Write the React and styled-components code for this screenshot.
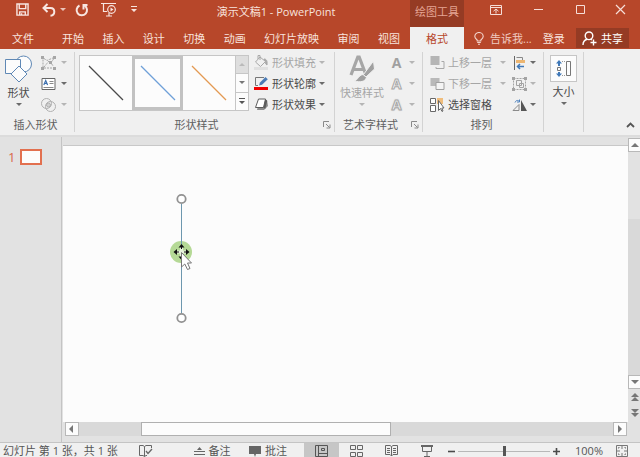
import { useState } from "react";
import styled, { createGlobalStyle } from "styled-components";

const tabs = ["开始", "插入", "设计", "切换", "动画", "幻灯片放映", "审阅", "视图"];

const lineStyles = [
  { name: "黑色线条", color: "#4a4a4a" },
  { name: "蓝色线条", color: "#6fa0d8" },
  { name: "橙色线条", color: "#e39a52" },
];

export default function App() {
  const [activeStyle, setActiveStyle] = useState(1);
  const [zoom, setZoom] = useState(50);

  return (
    <>
      <GlobalStyle />
      <Window>
        <Header>
          <TitleRow>
            <QuickAccess>
              <QuickButton $width={29} aria-label="保存">
                <SaveIcon />
              </QuickButton>
              <QuickButton $width={27} aria-label="撤消">
                <UndoIcon />
              </QuickButton>
              <QuickButton $width={10} aria-label="撤消选项">
                <Caret />
              </QuickButton>
              <QuickButton $width={23} aria-label="重复">
                <RedoIcon />
              </QuickButton>
              <QuickButton $width={28} aria-label="从头开始">
                <PresentIcon />
              </QuickButton>
              <QuickButton $width={20} aria-label="自定义快速访问工具栏">
                <CaretLine />
              </QuickButton>
            </QuickAccess>
            <Title>演示文稿1 - PowerPoint</Title>
            <ContextTitle>绘图工具</ContextTitle>
            <WindowControls>
              <WindowButton aria-label="功能区显示选项">
                <RibbonOptionsIcon />
              </WindowButton>
              <WindowButton aria-label="最小化">
                <svg width="11" height="11" viewBox="0 0 11 11">
                  <path d="M1 5.5H10" stroke="#f6ded8" />
                </svg>
              </WindowButton>
              <WindowButton aria-label="最大化">
                <svg width="11" height="11" viewBox="0 0 11 11">
                  <path d="M1.5 1.5H9.5V9.5H1.5Z" fill="none" stroke="#f6ded8" />
                </svg>
              </WindowButton>
              <WindowButton aria-label="关闭">
                <svg width="11" height="11" viewBox="0 0 11 11">
                  <path d="M1 1L10 10M10 1L1 10" stroke="#f6ded8" strokeWidth="1.2" />
                </svg>
              </WindowButton>
            </WindowControls>
          </TitleRow>
          <TabRow>
            <Tabs>
              <FileTab>文件</FileTab>
              <TabList>
                {tabs.map((tab) => (
                  <Tab key={tab}>{tab}</Tab>
                ))}
              </TabList>
            </Tabs>
            <ActiveTab>格式</ActiveTab>
            <Account>
              <TellMe>
                <BulbIcon />
                告诉我...
              </TellMe>
              <Tab>登录</Tab>
              <ShareButton>
                <ShareIcon />
                共享
              </ShareButton>
            </Account>
          </TabRow>
        </Header>

        <Ribbon>
          <Group $width={75}>
            <GroupBody $gap={4}>
              <LargeButton $width={37}>
                <ShapesIcon />
                形状
                <Caret />
              </LargeButton>
              <Column>
                <ToolButton $disabled aria-label="编辑形状">
                  <EditShapeIcon />
                  <Caret $space={2} />
                </ToolButton>
                <ToolButton aria-label="文本框">
                  <TextBoxIcon />
                  <Caret $space={2} />
                </ToolButton>
                <ToolButton $disabled aria-label="合并形状">
                  <MergeIcon />
                  <Caret $space={2} />
                </ToolButton>
              </Column>
            </GroupBody>
            <GroupLabel>
              <span>插入形状</span>
            </GroupLabel>
          </Group>

          <Group $width={260}>
            <GroupBody $gap={5} $start={4}>
              <Gallery>
                {lineStyles.map((style, index) => (
                  <Swatch
                    key={style.name}
                    aria-label={style.name}
                    $active={index === activeStyle}
                    onClick={() => setActiveStyle(index)}
                  >
                    <svg width="36" height="36" viewBox="0 0 36 36">
                      <path d="M1 1L35 35" stroke={style.color} strokeWidth="1.3" />
                    </svg>
                  </Swatch>
                ))}
                <GallerySide>
                  <GalleryButton $disabled aria-label="上一行">
                    <Caret $up />
                  </GalleryButton>
                  <GalleryButton aria-label="下一行">
                    <Caret />
                  </GalleryButton>
                  <GalleryButton aria-label="其他">
                    <CaretLine />
                  </GalleryButton>
                </GallerySide>
              </Gallery>
              <Column>
                <ToolButton $disabled>
                  <FillIcon />
                  形状填充
                  <Caret />
                </ToolButton>
                <ToolButton>
                  <OutlineIcon />
                  形状轮廓
                  <Caret />
                </ToolButton>
                <ToolButton>
                  <EffectIcon />
                  形状效果
                  <Caret />
                </ToolButton>
              </Column>
            </GroupBody>
            <GroupLabel>
              <span>形状样式</span>
              <Launcher />
            </GroupLabel>
          </Group>

          <Group $width={88}>
            <GroupBody>
              <LargeButton $width={54} $disabled>
                <QuickStyleIcon />
                快速样式
                <Caret />
              </LargeButton>
              <Column>
                <ToolButton $disabled aria-label="文本填充">
                  <LetterIcon>A</LetterIcon>
                  <Caret $space={2} />
                </ToolButton>
                <ToolButton $disabled aria-label="文本轮廓">
                  <LetterIcon $outline>A</LetterIcon>
                  <Caret $space={2} />
                </ToolButton>
                <ToolButton $disabled aria-label="文本效果">
                  <LetterIcon $outline $glow>A</LetterIcon>
                  <Caret $space={2} />
                </ToolButton>
              </Column>
            </GroupBody>
            <GroupLabel>
              <span>艺术字样式</span>
              <Launcher />
            </GroupLabel>
          </Group>

          <Group $width={121}>
            <GroupBody $gap={6} $start={7}>
              <Column>
                <ToolButton $disabled>
                  <ForwardIcon />
                  上移一层
                  <Caret $space={5} />
                </ToolButton>
                <ToolButton $disabled>
                  <BackwardIcon />
                  下移一层
                  <Caret $space={5} />
                </ToolButton>
                <ToolButton>
                  <SelectionIcon />
                  选择窗格
                </ToolButton>
              </Column>
              <Column>
                <ToolButton aria-label="对齐">
                  <AlignIcon />
                  <Caret />
                </ToolButton>
                <ToolButton $disabled aria-label="组合">
                  <GroupIcon />
                  <Caret />
                </ToolButton>
                <ToolButton aria-label="旋转">
                  <RotateIcon />
                  <Caret />
                </ToolButton>
              </Column>
            </GroupBody>
            <GroupLabel>
              <span>排列</span>
            </GroupLabel>
          </Group>

          <Group $width={40}>
            <GroupBody>
              <LargeButton $width={39}>
                <SizeFrame>
                  <SizeIcon />
                </SizeFrame>
                大小
                <Caret />
              </LargeButton>
            </GroupBody>
          </Group>

          <CollapseButton aria-label="折叠功能区">
            <svg width="9" height="6" viewBox="0 0 9 6">
              <path d="M1 5L4.5 1.5L8 5" fill="none" stroke="#555" strokeWidth="1.8" />
            </svg>
          </CollapseButton>
        </Ribbon>

        <Workspace>
          <Thumbnails>
            <SlideNumber>1</SlideNumber>
            <Thumbnail aria-label="幻灯片 1" />
          </Thumbnails>
          <Editor>
            <Slide>
              <LineShape />
            </Slide>
            <HorizontalScroll>
              <ScrollButton aria-label="向左滚动">
                <Triangle d="M5 0V8L1 4Z" />
              </ScrollButton>
              <HorizontalTrack>
                <HorizontalThumb />
              </HorizontalTrack>
              <ScrollButton aria-label="向右滚动">
                <Triangle d="M2 0V8L6 4Z" />
              </ScrollButton>
            </HorizontalScroll>
          </Editor>
          <VerticalScroll>
            <ScrollButton aria-label="向上滚动">
              <Triangle d="M0 6H8L4 2Z" />
            </ScrollButton>
            <VerticalTrack />
            <ScrollButton aria-label="向下滚动">
              <Triangle d="M0 2H8L4 6Z" />
            </ScrollButton>
            <PageButton aria-label="上一张幻灯片">
              <Triangle d="M0 4H8L4 0ZM0 8H8L4 4Z" />
            </PageButton>
            <PageButton aria-label="下一张幻灯片">
              <Triangle d="M0 0H8L4 4ZM0 4H8L4 8Z" />
            </PageButton>
          </VerticalScroll>
        </Workspace>

        <StatusBar>
          <StatusText>幻灯片 第 1 张，共 1 张</StatusText>
          <StatusButton $width={14} aria-label="拼写检查">
            <ProofIcon />
          </StatusButton>
          <StatusTools>
            <StatusNotes>
              <StatusButton $width={56}>
                <NotesIcon />
                备注
              </StatusButton>
              <StatusButton $width={56}>
                <CommentIcon />
                批注
              </StatusButton>
            </StatusNotes>
            <StatusButton $width={35} $active aria-label="普通视图">
              <NormalIcon />
            </StatusButton>
            <StatusButton $width={35} aria-label="幻灯片浏览">
              <SorterIcon />
            </StatusButton>
            <StatusButton $width={35} aria-label="阅读视图">
              <ReadingIcon />
            </StatusButton>
            <StatusButton $width={35} aria-label="幻灯片放映">
              <ShowIcon />
            </StatusButton>
            <StatusButton $width={14} aria-label="缩小">
              <svg width="7" height="7" viewBox="0 0 7 7">
                <path d="M0 3.5H7" stroke="#4a4a4a" strokeWidth="1.6" />
              </svg>
            </StatusButton>
            <ZoomSlider
              type="range"
              aria-label="缩放"
              min="0"
              max="100"
              value={zoom}
              onChange={(event) => setZoom(Number(event.target.value))}
            />
            <StatusButton $width={12} aria-label="放大">
              <svg width="7" height="7" viewBox="0 0 7 7">
                <path d="M0 3.5H7M3.5 0V7" stroke="#4a4a4a" strokeWidth="1.6" />
              </svg>
            </StatusButton>
            <StatusButton $width={54}>100%</StatusButton>
            <StatusButton $width={12} aria-label="适应窗口">
              <FitIcon />
            </StatusButton>
          </StatusTools>
        </StatusBar>
      </Window>
    </>
  );
}

function SaveIcon() {
  return (
    <svg width="13" height="13" viewBox="0 0 14 14" fill="none" stroke="#f8e6e1" strokeWidth="1.5">
      <path d="M1 1H13V13H1Z" />
      <path d="M3.5 1V6H10.5V1" />
      <path d="M4 13V9.5H10V13M6 11V13" />
    </svg>
  );
}

function UndoIcon() {
  return (
    <svg width="14" height="14" viewBox="0 0 14 14" fill="none" stroke="#f8e6e1" strokeWidth="2">
      <path d="M5.5 1L1.5 5L5.5 9" />
      <path d="M2 5H8.5C11 5 12.3 6.5 12.3 8.8C12.3 11 11 12.5 8.5 12.8" />
    </svg>
  );
}

function RedoIcon() {
  return (
    <svg width="14" height="14" viewBox="0 0 14 14" fill="none" stroke="#f8e6e1" strokeWidth="2">
      <path d="M4.5 2.5A5.2 5.2 0 1 0 9.5 2.7" />
      <path d="M12.5 2H8.5V6.5" />
    </svg>
  );
}

function PresentIcon() {
  return (
    <svg width="16" height="15" viewBox="0 0 16 15" fill="none" stroke="#f8e6e1" strokeWidth="1.2">
      <path d="M0 1.5H15M2.5 2V9.5H6M5 14H11M8 11V14" />
      <circle cx="10.5" cy="7.5" r="3.8" />
      <path d="M9.5 5.5L12.5 7.5L9.5 9.5Z" fill="#f8e6e1" stroke="none" />
    </svg>
  );
}

function RibbonOptionsIcon() {
  return (
    <svg width="12" height="10" viewBox="0 0 12 10" fill="none" stroke="#f6ded8">
      <path d="M0.5 0.5H11.5V9.5H0.5ZM0.5 2.5H11.5M6 4V8.5M3.5 6.2L6 4L8.5 6.2" />
    </svg>
  );
}

function BulbIcon() {
  return (
    <svg width="10" height="13" viewBox="0 0 10 13" fill="none" stroke="#f4d6ce" strokeWidth="1.1">
      <path d="M3.2 9V8C2 7 0.8 6.2 0.8 4.5A4.2 4 0 0 1 9.2 4.5C9.2 6.2 8 7 6.8 8V9Z" />
      <path d="M3.2 10.5H6.8M4 12.3H6" />
    </svg>
  );
}

function ShareIcon() {
  return (
    <svg width="15" height="15" viewBox="0 0 15 15" fill="none" stroke="#fff" strokeWidth="1.4">
      <circle cx="7" cy="4.8" r="3.8" />
      <path d="M1 14C1 10.5 3 8.7 5.2 8.2M8.5 8.2L10 9" />
      <path d="M8.5 11.5H14.5M11.5 8.5V14.5" />
    </svg>
  );
}

function CaretLine() {
  return (
    <svg width="6" height="7" viewBox="0 0 6 7" fill="currentColor">
      <path d="M0 0H6V1H0ZM0 3H6L3 6Z" />
    </svg>
  );
}

function Triangle({ d }) {
  return (
    <svg width="8" height="8" viewBox="0 0 8 8" fill="#777">
      <path d={d} />
    </svg>
  );
}

function ShapesIcon() {
  return (
    <svg width="28" height="28" viewBox="0 0 28 28" fill="#fcfcfc" stroke="#5f88b5">
      <circle cx="18.5" cy="9" r="8" />
      <path d="M0.5 4.5H15.5V18.5H0.5Z" />
      <path d="M14 11L22 19L14 27L6 19Z" />
    </svg>
  );
}

function EditShapeIcon() {
  return (
    <svg width="15" height="14" viewBox="0 0 15 14" fill="none" stroke="#a6a6a6">
      <path d="M2 3.5V11M3 2.5L6 4.5L13 1.5M12.5 3L10 7L12.5 10.5M3 12H11M3 11L8 5" strokeDasharray="2 1" />
      <path d="M0 0H3V3H0ZM12 0H15V3H12ZM0 11H3V14H0ZM12 11H15V14H12ZM8 5H11V8H8Z" fill="#a6a6a6" stroke="none" />
    </svg>
  );
}

function TextBoxIcon() {
  return (
    <svg width="14" height="12" viewBox="0 0 14 12" fill="none" stroke="#666">
      <path d="M0.5 0.5H13.5V11.5H0.5Z" fill="#fff" />
      <path d="M2.3 7L4.2 2.5L6.1 7M3 5.5H5.4" stroke="#3c6fae" strokeWidth="1.2" />
      <path d="M8 3.5H12M8 5.5H12M2 9.5H12" stroke="#8a8a8a" />
    </svg>
  );
}

function MergeIcon() {
  return (
    <svg width="15" height="14" viewBox="0 0 15 14" fill="none" stroke="#b0b0b0">
      <circle cx="5.5" cy="5.5" r="5" />
      <circle cx="9.5" cy="8.5" r="5" />
      <circle cx="7.5" cy="7" r="2" fill="#d2d2d2" />
    </svg>
  );
}

function FillIcon() {
  return (
    <svg width="15" height="15" viewBox="0 0 15 15" fill="none" stroke="#a8a8a8">
      <path d="M0 12H14V15H0Z" fill="#e0e0e0" stroke="none" />
      <path d="M6 2L11.5 6.5L6.5 11.5L1.5 7ZM6 5V0.5H4V4" />
      <path d="M10 4C12.5 4 13.5 6 13 10C11.5 9 11 8 11.5 6.5Z" fill="#a8a8a8" />
    </svg>
  );
}

function OutlineIcon() {
  return (
    <svg width="15" height="15" viewBox="0 0 15 15" fill="none">
      <path d="M10 1.5H1.5V9.5H4" stroke="#777" />
      <path d="M5 9.5L6 6.5L11.5 1L13.8 3.2L8 8.7Z" fill="#4b7bb5" />
      <path d="M0 11H14V14H0Z" fill="#f00000" />
    </svg>
  );
}

function EffectIcon() {
  return (
    <svg width="15" height="13" viewBox="0 0 15 13">
      <path d="M5 3L13 2L14 8L10 12H3Z" fill="#8d8d8d" />
      <path d="M4.5 1H11.5L9.5 9.5H1.5Z" fill="#fff" stroke="#5c5c5c" strokeLinejoin="round" />
      <path d="M11.5 1L13.2 3L11.2 11L9.5 9.5Z" fill="#5c5c5c" />
    </svg>
  );
}

function QuickStyleIcon() {
  return (
    <svg width="26" height="28" viewBox="0 0 26 28" fill="none">
      <path d="M2 20L8.8 2H10.2L17 20M4.8 14.5H14" stroke="#a6a6a6" strokeWidth="3.2" />
      <path d="M24.5 6L25.5 14L17 22L14.5 19.5Z" fill="#a0a0a0" stroke="#f0f0f0" />
      <path d="M14 19.5L17.5 22.5C16 27 11 27.5 5.5 26C9 25 9 20.5 14 19.5Z" fill="#a0a0a0" stroke="#f0f0f0" />
    </svg>
  );
}

function ForwardIcon() {
  return (
    <svg width="14" height="14" viewBox="0 0 14 14" fill="none" stroke="#a8a8a8">
      <path d="M0 0H9V9H0Z" fill="#b5b5b5" stroke="none" />
      <path d="M11 5.5H13.5V12.5H5.5V11" />
    </svg>
  );
}

function BackwardIcon() {
  return (
    <svg width="14" height="14" viewBox="0 0 14 14" stroke="#a0a0a0">
      <path d="M0 1H9V9H0Z" fill="#b9b9b9" stroke="none" />
      <path d="M5.5 5.5H13.5V12.5H5.5Z" fill="#f4f4f4" />
    </svg>
  );
}

function SelectionIcon() {
  return (
    <svg width="15" height="16" viewBox="0 0 15 16" fill="#fff" stroke="#686868">
      <path d="M0.5 1.5H5.5V6.5H0.5ZM0.5 8.5H5.5V14.5H0.5Z" />
      <path d="M7 1H13V7H7Z" fill="#f0bd7c" stroke="none" />
      <path d="M8.5 3.5V13.5L10.5 11.5L12 14.5L13 14L11.8 11H14Z" />
    </svg>
  );
}

function AlignIcon() {
  return (
    <svg width="13" height="14" viewBox="0 0 13 14" fill="none">
      <path d="M1.5 0V14" stroke="#666" />
      <path d="M3.5 1.5H9.5V4" stroke="#888" />
      <path d="M3 4H12V7H3Z" fill="#ecb570" />
      <path d="M11 10.5H4.5M7 8L4.5 10.5L7 13" stroke="#3f78b8" strokeWidth="1.5" />
    </svg>
  );
}

function GroupIcon() {
  return (
    <svg width="15" height="14" viewBox="0 0 15 14" fill="none" stroke="#a3a3a3">
      <path d="M1.5 1.5H13.5V12.5H1.5Z" strokeDasharray="2 1" />
      <path d="M4.5 3.5H9.5V8.5H4.5ZM7.5 6.5H11.5V10.5H7.5Z" />
      <path d="M0 0H3V3H0ZM12 0H15V3H12ZM0 11H3V14H0ZM12 11H15V14H12Z" fill="#a3a3a3" stroke="none" />
    </svg>
  );
}

function RotateIcon() {
  return (
    <svg width="15" height="12" viewBox="0 0 15 12" fill="none">
      <path d="M1 11.5H7V5.5Z" stroke="#8a8a8a" />
      <path d="M9 1V12H15Z" fill="#555" />
      <path d="M3 3.5C4 1 6 1 7.5 2.5M7.5 0.5V3H5" stroke="#4b80bd" />
    </svg>
  );
}

function SizeIcon() {
  return (
    <svg width="16" height="17" viewBox="0 0 16 17" fill="none">
      <path d="M10.5 1.5H14.5V15.5H10.5Z" stroke="#777" />
      <path d="M6 1.5H10M6 15.5H10" stroke="#999" strokeDasharray="1 1" />
      <path d="M1.5 7.5H4.5V10.5H1.5Z" stroke="#777" />
      <path d="M3 0L6 3.5H4V6H2V3.5H0ZM3 17L6 13.5H4V12H2V13.5H0Z" fill="#3f78b8" />
    </svg>
  );
}

function Launcher() {
  return (
    <LauncherButton aria-label="更多选项">
      <svg width="8" height="8" viewBox="0 0 8 8" fill="none" stroke="currentColor">
        <path d="M0.5 6V0.5H6M3 3L6.5 6.5M7 3.5V7H3.5" />
      </svg>
    </LauncherButton>
  );
}

function LineShape() {
  return (
    <ShapeCanvas width="36" height="132" viewBox="0 0 36 132" fill="none">
      <circle cx="18" cy="59" r="11" fill="#b5d996" />
      <path d="M18.5 11V120" stroke="#6d97ae" />
      <g fill="#fff" stroke="#929292" strokeWidth="1.8">
        <circle cx="18.5" cy="6" r="4.2" />
        <circle cx="18.5" cy="125" r="4.2" />
      </g>
      <path d="M12 59H25M18.5 53V65" stroke="#e8f3dd" strokeWidth="3" />
      <path d="M12 59H16M21 59H25M18.5 53V56M18.5 62V65" stroke="#111" />
      <path d="M18.5 51L21.5 54.5H15.5ZM18.5 67L15.5 63.5H21.5ZM10.5 59L14 56V62ZM26.5 59L23 56V62Z" fill="#111" />
      <path d="M18.5 59.5V74L21.8 71L24.5 76.5L27 75.5L24.5 70H28.5Z" fill="#fff" stroke="#777" />
    </ShapeCanvas>
  );
}

function ProofIcon() {
  return (
    <svg width="14" height="12" viewBox="0 0 14 12" fill="none" stroke="#666">
      <path d="M5.5 1.5L4 0.5H0.5V10.5H4L5.5 11.5V1.5L7 0.5H12.5V3M5.5 11.5L7 10.5H8" />
      <path d="M7 6L9 8.5L13 4" strokeWidth="1.3" />
    </svg>
  );
}

function NotesIcon() {
  return (
    <svg width="11" height="8" viewBox="0 0 11 8" fill="#666">
      <path d="M5.5 0L8 3H3ZM0 4H11V5H0ZM0 7H11V8H0Z" />
    </svg>
  );
}

function CommentIcon() {
  return (
    <svg width="12" height="11" viewBox="0 0 12 11" fill="#666">
      <path d="M0 0H12V8H7L6 11L5 8H0Z" />
    </svg>
  );
}

function NormalIcon() {
  return (
    <svg width="13" height="12" viewBox="0 0 13 12" fill="none" stroke="#555">
      <path d="M0.5 0.5H12.5V11.5H0.5ZM3.5 0.5V11.5M3.5 8.5H12.5M6.5 3.5H9.5V5.5H6.5Z" />
    </svg>
  );
}

function SorterIcon() {
  return (
    <svg width="13" height="12" viewBox="0 0 13 12" fill="none" stroke="#666">
      <path d="M0.5 0.5H5.5V4.5H0.5ZM7.5 0.5H12.5V4.5H7.5ZM0.5 7.5H5.5V11.5H0.5ZM7.5 7.5H12.5V11.5H7.5Z" />
    </svg>
  );
}

function ReadingIcon() {
  return (
    <svg width="13" height="12" viewBox="0 0 13 12" fill="none" stroke="#666">
      <path d="M6.5 1.5L5 0.5H0.5V9.5H5L6.5 11L8 9.5H12.5V0.5H8ZM6.5 1.5V11" />
      <path d="M2 3.5H5M2 5.5H5M2 7.5H5M8 3.5H11M8 5.5H11M8 7.5H11" />
    </svg>
  );
}

function ShowIcon() {
  return (
    <svg width="12" height="12" viewBox="0 0 12 12" fill="none" stroke="#666">
      <path d="M0 1H12" strokeWidth="2" />
      <path d="M1.5 2V6.5H10.5V2M6 7V11M3 11.5H9" />
    </svg>
  );
}

function FitIcon() {
  return (
    <svg width="12" height="12" viewBox="0 0 12 12" fill="none" stroke="#777">
      <path d="M0.5 0.5H11.5V11.5H0.5Z" />
      <path d="M6 1V4M6 8V11M1 6H4M8 6H11" />
      <path d="M2.5 3.5V2.5H3.5M8.5 2.5H9.5V3.5M2.5 8.5V9.5H3.5M8.5 9.5H9.5V8.5" />
    </svg>
  );
}

const GlobalStyle = createGlobalStyle`
  * {
    box-sizing: border-box;
  }
  body {
    margin: 0;
    overflow: hidden;
    font-family: "Open Sans", "Noto Sans CJK SC", sans-serif;
    font-size: 11px;
    line-height: 16px;
    color: #4a4a4a;
  }
  button {
    margin: 0;
    padding: 0;
    border: 0;
    background: none;
    color: inherit;
    font: inherit;
    white-space: nowrap;
  }
  svg {
    flex: none;
  }
`;

const Window = styled.div`
  display: flex;
  flex-direction: column;
  height: 100vh;
  background: #e2e2e2;
`;

const Header = styled.header`
  background: #b7472a;
  color: #f8e3dd;
`;

const TitleRow = styled.div`
  display: flex;
  height: 27px;
`;

const QuickAccess = styled.div`
  display: flex;
  flex: none;
  width: 142px;
  height: 19px;
`;

const QuickButton = styled.button`
  display: flex;
  align-items: center;
  justify-content: flex-end;
  width: ${({ $width }) => $width}px;
`;

const Title = styled.h1`
  flex: 1;
  margin: 0;
  font-size: 11px;
  font-weight: 400;
  line-height: 24px;
  text-align: center;
`;

const ContextTitle = styled.div`
  width: 54px;
  background: #953b24;
  color: #e5a595;
  line-height: 24px;
  text-align: center;
`;

const WindowControls = styled.div`
  display: flex;
  width: 176px;
  height: 19px;
  padding-left: 11px;
`;

const WindowButton = styled.button`
  display: flex;
  flex: 0 1 42px;
  align-items: center;
  justify-content: center;

  &:last-child {
    flex-basis: 39px;
  }
`;

const TabRow = styled.div`
  display: flex;
  height: 22px;
  line-height: 21px;
`;

const Tabs = styled.nav`
  display: flex;
  flex: 1;
`;

const FileTab = styled.button`
  width: 46px;
`;

const TabList = styled.div`
  display: flex;
  justify-content: space-between;
  width: 338px;
  margin-left: 16px;
`;

const Tab = styled.button`
  height: 100%;
`;

const ActiveTab = styled.button`
  width: 54px;
  background: #f0f0f0;
  color: #b7472a;
`;

const Account = styled.div`
  display: flex;
  align-items: center;
  width: 176px;
  padding: 0 11px 0 10px;
  justify-content: space-between;
`;

const TellMe = styled.button`
  display: flex;
  align-items: center;
  gap: 6px;
  color: #f0cbc1;
`;

const ShareButton = styled.button`
  display: flex;
  align-items: center;
  justify-content: center;
  gap: 4px;
  width: 53px;
  height: 20px;
  background: #953b24;
  color: #fff;
`;

const Ribbon = styled.section`
  display: flex;
  flex: none;
  height: 88px;
  padding: 3px 0;
  background: #f0f0f0;
  border-bottom: 2px solid #dcdcdc;
`;

const Group = styled.div`
  display: flex;
  flex-direction: column;
  width: ${({ $width }) => $width}px;
  border-right: 1px solid #d3d3d3;
`;

const GroupBody = styled.div`
  display: flex;
  gap: ${({ $gap = 0 }) => $gap}px;
  height: 64px;
  padding-left: ${({ $start = 0 }) => $start}px;
`;

const GroupLabel = styled.div`
  display: flex;
  align-items: center;
  gap: 5px;
  padding: 2px 3px 0 0;
  color: #606060;

  > span {
    flex: 1;
    text-align: center;
  }
`;

const LauncherButton = styled.button`
  display: flex;
  width: 8px;
  color: #8a8a8a;
`;

const LargeButton = styled.button`
  display: flex;
  flex-direction: column;
  align-items: center;
  gap: 2px;
  width: ${({ $width }) => $width}px;
  padding-top: 3px;
  color: ${({ $disabled }) => ($disabled ? "#a6a6a6" : "#4a4a4a")};
`;

const SizeFrame = styled.span`
  display: flex;
  align-items: center;
  justify-content: center;
  width: 27px;
  height: 27px;
  background: #fcfcfc;
  border: 1px solid #c6c6c6;
`;

const Column = styled.div`
  display: flex;
  flex-direction: column;
`;

const ToolButton = styled.button`
  display: flex;
  align-items: center;
  gap: 3px;
  height: 21px;
  color: ${({ $disabled }) => ($disabled ? "#a6a6a6" : "#4a4a4a")};

  > svg {
    width: 15px;
  }
`;

const Caret = styled.span`
  width: 0;
  height: 0;
  margin-left: ${({ $space = 0 }) => $space}px;
  border: 3px solid transparent;
  border-top-color: ${({ $up }) => ($up ? "transparent" : "currentColor")};
  border-top-width: ${({ $up }) => ($up ? "0" : "3px")};
  border-bottom-color: ${({ $up }) => ($up ? "currentColor" : "transparent")};
  border-bottom-width: ${({ $up }) => ($up ? "3px" : "0")};
  opacity: 0.8;
`;

const LetterIcon = styled.span`
  width: 15px;
  font-size: 14px;
  font-weight: 700;
  text-align: center;
  color: ${({ $outline }) => ($outline ? "#f4f4f4" : "#a0a0a0")};
  -webkit-text-stroke: ${({ $outline }) => ($outline ? "1px #a8a8a8" : "0")};
  text-shadow: ${({ $glow }) => ($glow ? "0 0 2px #b0b0b0" : "none")};
`;

const Gallery = styled.div`
  display: flex;
  flex: none;
  width: 170px;
  height: 56px;
  margin-top: 3px;
  background: #fcfcfc;
  border: 1px solid #c6c6c6;
`;

const Swatch = styled.button`
  display: flex;
  flex: 1;
  align-items: center;
  justify-content: center;
  border: 3px solid ${({ $active }) => ($active ? "#c2c2c2" : "transparent")};
`;

const GallerySide = styled.div`
  display: flex;
  flex-direction: column;
  width: 13px;
  border-left: 1px solid #c6c6c6;
`;

const GalleryButton = styled.button`
  display: flex;
  flex: 1;
  align-items: center;
  justify-content: center;
  background: ${({ $disabled }) => ($disabled ? "#dedede" : "#fcfcfc")};
  color: ${({ $disabled }) => ($disabled ? "#b0b0b0" : "#555")};

  & + & {
    border-top: 1px solid #c6c6c6;
  }
`;

const CollapseButton = styled.button`
  align-self: flex-end;
  margin-left: auto;
  padding: 0 5px;
`;

const Workspace = styled.main`
  display: flex;
  flex: 1;
  min-height: 0;
  border-bottom: 1px solid #c4c4c4;
`;

const Thumbnails = styled.aside`
  display: flex;
  align-items: flex-start;
  gap: 4px;
  width: 62px;
  padding: 12px 0 0 8px;
  border-right: 1px solid #c4c4c4;
`;

const SlideNumber = styled.span`
  width: 8px;
  font-size: 13px;
  color: #d9694a;
`;

const Thumbnail = styled.button`
  width: 22px;
  height: 16px;
  background: #fcfcfc;
  border: 2px solid #e2704f;
`;

const Editor = styled.div`
  display: flex;
  flex: 1;
  flex-direction: column;
  padding: 8px 0 6px 1px;
`;

const Slide = styled.div`
  position: relative;
  flex: 1;
  background: #fcfcfc;
  border-top: 1px solid #c8c8c8;
`;

const ShapeCanvas = styled.svg`
  position: absolute;
  left: 100px;
  top: 47px;
`;

const HorizontalScroll = styled.div`
  display: flex;
  height: 14px;
  padding: 0 1px 0 2px;
`;

const ScrollButton = styled.button`
  display: flex;
  flex: none;
  align-items: center;
  justify-content: center;
  width: 14px;
  height: 14px;
  background: #fcfcfc;
  border: 1px solid #b8b8b8;
`;

const HorizontalTrack = styled.div`
  flex: 1;
  padding-left: 11%;
  background: #d9d9d9;
`;

const HorizontalThumb = styled.div`
  width: 53%;
  height: 14px;
  background: #fcfcfc;
  border: 1px solid #b0b0b0;
`;

const VerticalScroll = styled.div`
  display: flex;
  flex-direction: column;
  width: 12px;
  padding: 1px 0 21px;
`;

const VerticalTrack = styled.div`
  flex: 1;
  background: linear-gradient(#e2e2e2 30%, #d9d9d9 30%);
`;

const PageButton = styled.button`
  display: flex;
  align-items: center;
  justify-content: center;
  width: 14px;
  height: 16px;
`;

const StatusBar = styled.footer`
  display: flex;
  flex: none;
  height: 14px;
  padding-left: 3px;
  background: #f0f0f0;
  color: #555;
  line-height: 12px;
`;

const StatusText = styled.span`
  width: 136px;
  padding-top: 2px;
  white-space: nowrap;
`;

const StatusTools = styled.div`
  display: flex;
  margin-left: auto;
  padding-right: 12px;
`;

const StatusNotes = styled.div`
  display: flex;
  padding-right: 8px;
`;

const StatusButton = styled.button`
  display: flex;
  align-items: center;
  justify-content: center;
  gap: 4px;
  width: ${({ $width }) => $width}px;
  padding-top: 2px;
  background: ${({ $active }) => ($active ? "#c6c6c6" : "none")};
`;

const ZoomSlider = styled.input`
  width: 92px;
  height: 10px;
  margin: 3px 0 0;
  appearance: none;
  background: linear-gradient(#b8b8b8, #b8b8b8) center / 100% 1px no-repeat;

  &::-webkit-slider-thumb {
    appearance: none;
    width: 3px;
    height: 10px;
    background: #555;
  }
`;
